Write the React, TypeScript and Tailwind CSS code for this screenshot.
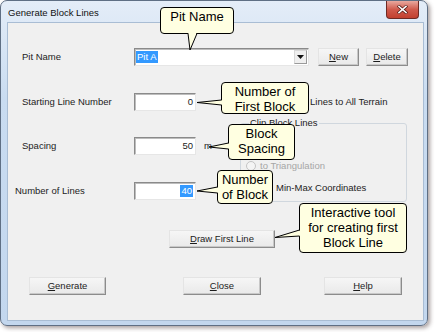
import React from 'react'

const sans = "font-['Liberation_Sans',Arial,sans-serif]"

const WinButton = ({
  children,
  className = '',
}: {
  children: React.ReactNode
  className?: string
}) => (
  <button
    type="button"
    className={`flex items-center justify-center h-[18px] bg-[linear-gradient(to_bottom,#f6f6f6,#e9e9e9)] border border-t-[#e4e4e4] border-l-[#e4e4e4] border-r-[#8c8c8c] border-b-[#8c8c8c] shadow-[inset_-1px_-1px_0_#c8c8c8] text-[9.5px] text-[#1c1c1c] ${className}`}
  >
    {children}
  </button>
)

const Sunken = ({
  children,
  className = '',
}: {
  children?: React.ReactNode
  className?: string
}) => (
  <div
    className={`h-[18px] bg-white border border-t-[#8a8a8a] border-l-[#8a8a8a] border-r-[#e6e6e6] border-b-[#e6e6e6] shadow-[inset_1px_1px_0_#bdbdbd] flex items-center text-[9.5px] text-[#1c1c1c] ${className}`}
  >
    {children}
  </div>
)

const Label = ({ text, className = 'pl-[14px]' }: { text: string; className?: string }) => (
  <div className={`w-[126px] shrink-0 text-[9.5px] text-[#1c1c1c] ${className}`}>{text}</div>
)

const Radio = ({
  label,
  disabled,
  className = 'gap-[4px]',
}: {
  label?: string
  disabled?: boolean
  className?: string
}) => (
  <div className={`h-[22px] flex items-center ${className}`}>
    <span
      className={`w-[10px] h-[10px] rounded-full border ${
        disabled ? 'border-[#c4c4c4] bg-[#f4f4f4]' : 'border-[#7a7a7a] bg-white'
      }`}
    />
    {label && (
      <span className={`text-[9.5px] ${disabled ? 'text-[#a6a6a6]' : 'text-[#1c1c1c]'}`}>{label}</span>
    )}
  </div>
)

const callouts = [
  { left: 160, top: 7, w: 74, h: 27, lines: ['Pit Name'] },
  { left: 221, top: 82, w: 88, h: 32, lines: ['Number of', 'First Block'] },
  { left: 228, top: 124, w: 67, h: 36, lines: ['Block', 'Spacing'] },
  { left: 217, top: 170, w: 56, h: 34, lines: ['Number', 'of Block'] },
  { left: 299, top: 203, w: 108, h: 50, lines: ['Interactive tool', 'for creating first', 'Block Line'] },
]

// tail: two base points on the box border, the tip, and which way is "into" the box
const tails = [
  { b1: [188, 33.5], b2: [197, 33.5], tip: [190, 50], d: [0, -2] },
  { b1: [221.5, 100], b2: [221.5, 105], tip: [197, 102.5], d: [2, 0] },
  { b1: [228.5, 143], b2: [228.5, 149], tip: [209, 147], d: [2, 0] },
  { b1: [217.5, 187], b2: [217.5, 193], tip: [197, 191], d: [2, 0] },
  { b1: [299.5, 230], b2: [299.5, 236], tip: [275, 237.5], d: [2, 0] },
]

export default function App() {
  return (
    <div className={`relative w-[436px] h-[332px] bg-white overflow-hidden ${sans}`}>
      {/* window */}
      <div className="w-[428px] h-[326px] rounded-[7px] border border-[#5f6f84] bg-[linear-gradient(to_bottom,#e4edf8,#c9dcf1_30%,#c3d7ee)] shadow-[2px_2px_4px_rgba(60,40,40,0.45)] flex flex-col">
        <div className="h-[21px] flex items-start justify-between">
          <span className="pl-[7px] pt-[5px] text-[9.5px] text-[#111]">Generate Block Lines</span>
          <div className="mr-[8px] w-[33px] h-[18px] rounded-b-[4px] border border-t-0 border-[#6e2a24] bg-[linear-gradient(to_bottom,#e9a99f,#d05a4c_50%,#c2402f)] flex items-center justify-center">
            <svg width="11" height="9" viewBox="0 0 11 9">
              <path d="M2 1.5 L9 7.5 M9 1.5 L2 7.5" stroke="#5a1f1a" strokeWidth="3" strokeLinecap="square" />
              <path d="M2 1.5 L9 7.5 M9 1.5 L2 7.5" stroke="#ffffff" strokeWidth="1.6" strokeLinecap="square" />
            </svg>
          </div>
        </div>

        {/* client area */}
        <div className="flex-1 ml-[6px] mr-[3px] mb-[4px] border border-[#a9bdd4] bg-[#f0f0f0] flex flex-col pt-[25px]">
          <div className="flex items-center h-[18px]">
            <Label text="Pit Name" />
            <Sunken className="w-[175px] justify-between pl-[1px] pr-[1px]">
              <span className="bg-[#3399ff] text-white px-[1px] leading-[12px]">Pit A</span>
              <span className="w-[13px] h-[14px] bg-[#efefef] border border-[#d8d8d8] border-r-[#9a9a9a] border-b-[#9a9a9a] flex items-center justify-center">
                <svg width="7" height="4" viewBox="0 0 7 4">
                  <path d="M0 0 H7 L3.5 4 Z" fill="#111" />
                </svg>
              </span>
            </Sunken>
            <WinButton className="ml-[9px] w-[41px]">
              <span>
                <span className="underline">N</span>ew
              </span>
            </WinButton>
            <WinButton className="ml-[7px] w-[42px]">
              <span>
                <span className="underline">D</span>elete
              </span>
            </WinButton>
          </div>

          <div className="flex mt-[27px]">
            <div className="w-[232px] flex flex-col">
              <div className="flex items-center h-[18px]">
                <Label text="Starting Line Number" />
                <Sunken className="w-[62px] justify-end pr-[2px]">0</Sunken>
              </div>
              <div className="flex items-center h-[18px] mt-[26px]">
                <Label text="Spacing" />
                <Sunken className="w-[62px] justify-end pr-[2px]">50</Sunken>
                <span className="ml-[8px] text-[9.5px] text-[#1c1c1c]">m</span>
              </div>
              <div className="flex items-center h-[18px] mt-[27px]">
                <Label text="Number of Lines" className="pl-[7px]" />
                <Sunken className="w-[62px] justify-end pr-[2px]">
                  <span className="bg-[#3399ff] text-white px-[1px] leading-[12px]">40</span>
                </Sunken>
              </div>
            </div>

            <div className="w-[167px] flex flex-col">
              <div className="h-[18px] flex items-center pl-[52px] gap-[7px]">
                <span className="w-[11px] h-[11px] border border-[#8f8f8f] bg-white" />
                <span className="text-[9.5px] text-[#1c1c1c]">Lines to All Terrain</span>
              </div>
              <fieldset className="mt-[7px] h-[84px] border border-[#d0d7de] rounded-[3px] pl-[5px] pt-[5px]">
                <legend className="ml-[3px] px-[1px] text-[9.5px] leading-[10px] text-[#1c1c1c]">Clip Block Lines</legend>
                <Radio />
                <Radio label="to Triangulation" disabled />
                <Radio label="Min-Max Coordinates" className="pl-[14px] gap-[6px]" />
              </fieldset>
            </div>
          </div>

          <div className="flex mt-[28px] pl-[161px]">
            <WinButton className="w-[106px]">
              <span>
                <span className="underline">D</span>raw First Line
              </span>
            </WinButton>
          </div>

          <div className="flex mt-[29px] pl-[21px]">
            <WinButton className="w-[77px]">
              <span>
                <span className="underline">G</span>enerate
              </span>
            </WinButton>
            <WinButton className="ml-[77px] w-[78px]">
              <span>
                <span className="underline">C</span>lose
              </span>
            </WinButton>
            <WinButton className="ml-[63px] w-[78px]">
              <span>
                <span className="underline">H</span>elp
              </span>
            </WinButton>
          </div>
        </div>
      </div>

      {/* annotation callouts */}
      {callouts.map((c, i) => (
        <div
          key={i}
          className="absolute rounded-[4px] border border-black bg-[#ffffe1] pt-[1px] flex flex-col items-center text-[13px] leading-[15px] text-black"
          style={{ left: c.left, top: c.top, width: c.w, height: c.h }}
        >
          {c.lines.map(l => (
            <span key={l} className="whitespace-nowrap">
              {l}
            </span>
          ))}
        </div>
      ))}
      <svg className="absolute left-0 top-0 pointer-events-none" width="436" height="332">
        {tails.map((t, i) => (
          <g key={i}>
            <polygon
              points={`${t.b1[0] + t.d[0]},${t.b1[1] + t.d[1]} ${t.b2[0] + t.d[0]},${t.b2[1] + t.d[1]} ${t.tip[0]},${t.tip[1]}`}
              fill="#ffffe1"
            />
            <polyline
              points={`${t.b1[0]},${t.b1[1]} ${t.tip[0]},${t.tip[1]} ${t.b2[0]},${t.b2[1]}`}
              fill="none"
              stroke="#000"
              strokeWidth="1"
            />
          </g>
        ))}
      </svg>
    </div>
  )
}
